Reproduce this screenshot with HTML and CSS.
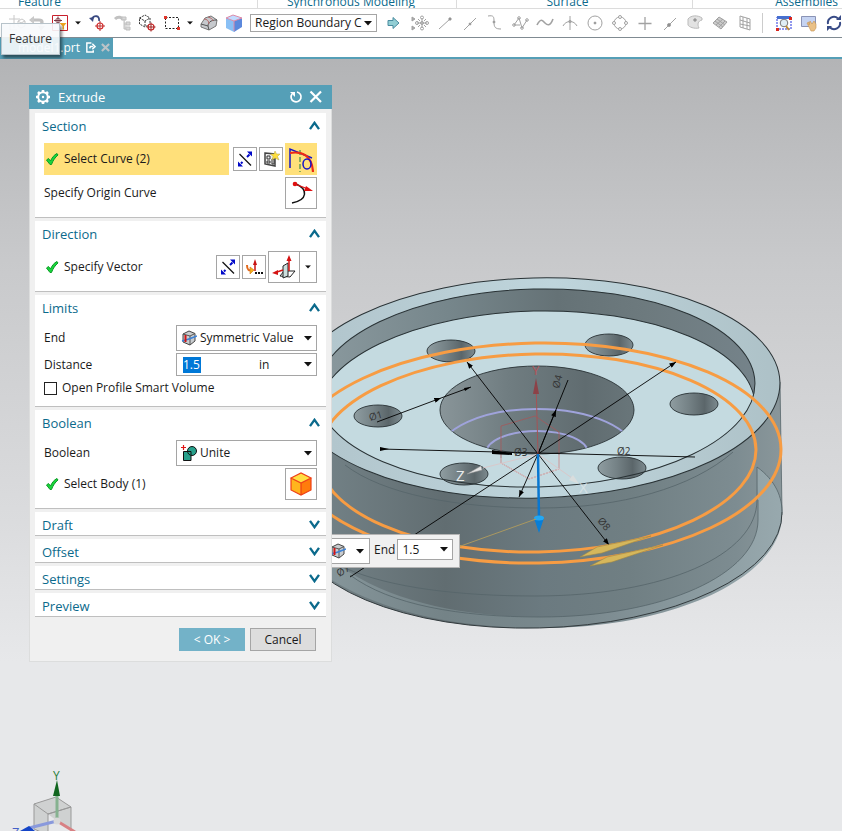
FILE: index.html
```html
<!DOCTYPE html>
<html lang="en">
<head>
<meta charset="utf-8">
<title>model1.prt - Extrude</title>
<link rel="stylesheet" href="styles.css">
</head>
<body>
<svg class="defs" aria-hidden="true">
  <symbol id="check" viewBox="0 0 14 14"><path d="M1.500 8 3.500 6.500 5.500 9 C7 5.500 9 3 12 1.500 L13 3 C10 5.500 8 8.500 6.500 12.500 L5 12.500Z" fill="#19d63c" stroke="#0c9a26" stroke-width="1"/></symbol>
  <symbol id="flip" viewBox="0 0 18 18"><path d="M3.500 4 15 15.500" stroke="#111" stroke-width="1.200"/><path d="M5 13.500 6.500 12M11 7 13.500 4.500" stroke="#0008c8" stroke-width="2"/><path d="M2 16.500V11.500L7 16.500ZM16 1.500V6.500L11 1.500Z" fill="#0008c8"/></symbol>
  <symbol id="up" viewBox="0 0 12 10"><path d="M1 9 6 2 11 9" fill="none" stroke="#0b6a8c" stroke-width="2.600"/></symbol>
  <symbol id="down" viewBox="0 0 12 10"><path d="M1 1 6 8 11 1" fill="none" stroke="#0b6a8c" stroke-width="2.600"/></symbol>
  <symbol id="caret" viewBox="0 0 8 5"><path d="M0 0H8L4 4.500Z" fill="#111"/></symbol>
  <symbol id="limit" viewBox="0 0 16 16"><path d="M2 4 8 1 14 3.500V11L9 15 2 12Z" fill="#c9cccf" stroke="#444"/><path d="M2 4 9 6 14 3.500M9 6V15" fill="none" stroke="#555"/><path d="M1 11 8 9 16 6" stroke="#3c82d8" stroke-width="1.500"/><path d="M4.500 5V12" stroke="#d31515" stroke-width="2"/></symbol>
</svg>

<header class="ribbon">
  <div class="group g-feature"><span>Feature</span></div>
  <div class="group g-sync"><span>Synchronous Modeling</span></div>
  <div class="group g-surface"><span>Surface</span></div>
  <div class="group g-asm"><span>Assemblies</span></div>
</header>

<nav class="toolbar" aria-label="Selection bar">
  <button class="tool narrow dim" aria-label="Feature"><svg viewBox="0 0 18 18"><path d="M1 5H12M6 1V14M10 7 14 5 17 7V12L13 14 10 12ZM10 7 13 9 17 7M2 10V16H9" fill="none" stroke="#888"/></svg></button>
  <button class="tool narrow dim" aria-label="Undo selection"><svg viewBox="0 0 18 18"><path d="M3 6H11C15 6 15 10 12 10" fill="none" stroke="#777" stroke-width="3"/><path d="M1 6 6 2V10ZM10 12H17L13 17Z" fill="#888"/></svg></button>
  <button class="tool" aria-label="Snap filter"><svg viewBox="0 0 18 18"><path d="M1.500 1.500H16.500V16.500H1.500Z" fill="#fff" stroke="#c8202c"/><circle cx="7" cy="6.500" r="2.300" fill="none" stroke="#94545c"/><path d="M7 2.500V10.500M3 6.500H11" stroke="#773b45"/><path d="M8.500 9H15.500L13 12V15.500H11.500V12Z" fill="#f0a51e"/></svg></button>
  <button class="tool drop" aria-label="Filter options"><svg viewBox="0 0 8 5"><use href="#caret"/></svg></button>
  <button class="tool" aria-label="Reset selection"><svg viewBox="0 0 18 18"><path d="M4 5C6 1 12 1 11 7" fill="none" stroke="#3a4a82" stroke-width="1.800"/><path d="M1 4 6 3 5 8Z" fill="#3a4a82"/><circle cx="12" cy="12" r="3" fill="none" stroke="#d52b2b" stroke-width="1.200"/><path d="M12 7V17M7 12H17" stroke="#b33"/></svg></button>
  <button class="tool dim" aria-label="Tree"><svg viewBox="0 0 18 18"><path d="M2 5C5 2 9 3 10 6" fill="none" stroke="#777" stroke-width="3"/><path d="M11 5V15H14M11 10H14M13 8H17V11H13ZM13 13H17V16H13ZM9 3H13V6H9Z" fill="#aaa" stroke="#777"/></svg></button>
  <button class="tool" aria-label="Select body"><svg viewBox="0 0 18 18"><path d="M1.500 4 7 1 12 4V10L7 13 1.500 10ZM1.500 4 7 7 12 4M7 7V13" fill="none" stroke="#333" stroke-dasharray="2 1"/><circle cx="13" cy="13" r="3" fill="#fff" stroke="#c22" stroke-width="1.200"/><path d="M13 8.500V17.500M8.500 13H17.500" stroke="#922"/></svg></button>
  <button class="tool" aria-label="Rectangle select"><svg viewBox="0 0 18 18"><path d="M2.500 3.500H15.500V14.500H2.500Z" fill="none" stroke="#222" stroke-dasharray="2 1.500"/><path d="M1 2H4V5H1ZM14 13H17V16H14Z" fill="#e0362b"/></svg></button>
  <button class="tool drop" aria-label="Select options"><svg viewBox="0 0 8 5"><use href="#caret"/></svg></button>
  <button class="tool" aria-label="Shaded part"><svg viewBox="0 0 18 18"><path d="M1 10 5 4 11 2 17 6 16 12 9 16 1 13Z" fill="#c6c9cd" stroke="#777"/><path d="M1 10 8 12 9 16M8 12C8 9 10 6 17 6" fill="none" stroke="#555"/><path d="M4 5C7 5 9 7 9 10M8 3C11 4 13 5 13 7" fill="none" stroke="#b76a6a"/></svg></button>
  <button class="tool" aria-label="Shaded cube"><svg viewBox="0 0 18 18"><path d="M1 4 8 1 17 4 9 7Z" fill="#c1dbff"/><path d="M1 4 9 7V18L1 14Z" fill="#89c0f5"/><path d="M9 7 17 4V13L9 18Z" fill="#5b88dc"/><path d="M1 4 8 1 17 4 9 7ZM9 7V17" fill="none" stroke="#dc8ba9"/></svg></button>
  <select class="region" aria-label="Region rule"><option>Region Boundary C</option></select>
  <button class="tool go" aria-label="Next"><svg viewBox="0 0 18 18"><path d="M4 6.500H9V3.500L15 9 9 14.500V11.500H4Z" fill="#92ced4" stroke="#498b9f"/></svg></button>
  <div class="snaps">
    <button class="tool" aria-label="Snap points"><svg viewBox="0 0 18 18" class="line"><path d="M1 3 4 5 1 7ZM1 12 4 14 1 16Z" fill="#aaa"/><path d="M6 9H16M11 4V14"/><circle cx="11" cy="9" r="1.500"/><circle cx="11" cy="3.500" r="1.500"/><circle cx="11" cy="14.500" r="1.500"/><circle cx="6" cy="9" r="1.500"/><circle cx="16" cy="9" r="1.500"/><path d="M7 5 9 7M15 5 13 7M7 13 9 11M15 13 13 11"/></svg></button>
    <button class="tool" aria-label="End point"><svg viewBox="0 0 18 18" class="line"><path d="M3 15 14 5"/><circle cx="14" cy="5" r="1.200" fill="#777"/></svg></button>
    <button class="tool" aria-label="Mid point"><svg viewBox="0 0 18 18" class="line"><path d="M3 16 15 4"/><circle cx="9" cy="10" r="1" fill="#777"/></svg></button>
    <button class="tool" aria-label="Control point"><svg viewBox="0 0 18 18" class="line"><path d="M2 2C8 1 8 3 8 8S9 15 15 15"/><circle cx="8" cy="8" r="1" fill="#888"/></svg></button>
    <button class="tool" aria-label="Polyline point"><svg viewBox="0 0 18 18" class="line"><path d="M3 11 8 4 11 14 16 6M3 11H9"/><circle cx="3" cy="11" r="1.300"/><circle cx="8" cy="4" r="1.300"/><circle cx="11" cy="14" r="1.300"/><circle cx="16" cy="6" r="1.300"/></svg></button>
    <button class="tool" aria-label="Spline point"><svg viewBox="0 0 18 18" class="line"><path d="M1 11C5 3 7 7 9 9S14 13 17 5" stroke-width="1.600"/></svg></button>
    <button class="tool" aria-label="Intersection point"><svg viewBox="0 0 18 18" class="line"><path d="M2 12C5 6 13 6 16 12M9 2V16"/><circle cx="9" cy="7.500" r="1.200"/></svg></button>
    <button class="tool" aria-label="Arc centre"><svg viewBox="0 0 18 18" class="line"><circle cx="9" cy="9" r="7"/><circle cx="9" cy="9" r="1" fill="#777"/></svg></button>
    <button class="tool" aria-label="Quadrant point"><svg viewBox="0 0 18 18" class="line"><circle cx="9" cy="9" r="6"/><g fill="#fff"><circle cx="9" cy="3" r="1.500"/><circle cx="9" cy="15" r="1.500"/><circle cx="3" cy="9" r="1.500"/><circle cx="15" cy="9" r="1.500"/></g></svg></button>
    <button class="tool" aria-label="Existing point"><svg viewBox="0 0 18 18" class="line"><path d="M9 3V16M2.500 9.500H15.500" stroke-width="1.300"/></svg></button>
    <button class="tool" aria-label="Point on curve"><svg viewBox="0 0 18 18" class="line"><path d="M3 16 15 4"/><circle cx="8" cy="11" r="1.500" fill="#888"/></svg></button>
    <button class="tool" aria-label="Point on face"><svg viewBox="0 0 18 18" class="line"><path d="M2 5C5 1 12 1 16 4L16 6C12 7 11 10 13 14 8 15 3 13 2 11Z" fill="#e2e2e2" stroke="#bbb"/><circle cx="9" cy="6" r="1.300" fill="#888"/></svg></button>
    <button class="tool" aria-label="Facet point"><svg viewBox="0 0 18 18" class="line"><path d="M2 9 8 3 16 8 10 15ZM4 7 12 13M6 5 14 11M5 11 12 5M8 13 14 7" fill="#ccc"/></svg></button>
    <button class="tool" aria-label="Grid point"><svg viewBox="0 0 18 18" class="line"><path d="M4 2 14 5V16L4 13ZM4 6 14 9M4 10 14 12M7 3V14M11 4V15"/></svg></button>
  </div>
  <i class="sep"></i>
  <button class="tool" aria-label="Fit view"><svg viewBox="0 0 18 18"><path d="M2 3H16V15H2Z" fill="none" stroke="#2230dd" stroke-dasharray="2 1"/><path d="M2 2H16V5H2Z" fill="#466fd0"/><circle cx="9" cy="9" r="3.800" fill="#e0eef5" stroke="#777"/><path d="M11 12 14 16" stroke="#bd8a36" stroke-width="2"/><path d="M14 3H17V6H14ZM1 14H4V17H1Z" fill="#d9271f"/></svg></button>
  <button class="tool" aria-label="Pan view"><svg viewBox="0 0 18 18"><path d="M1.500 2.500H15.500V12.500H1.500Z" fill="#c5d3f2" stroke="#8a93b5"/><path d="M7 9 9 8 9 11 10 7 12 10 14 7 16 10V14L14 17H11Z" fill="#eac187" stroke="#c49251" stroke-width=".6"/></svg></button>
  <button class="tool" aria-label="Rotate view"><svg viewBox="0 0 18 18"><path d="M3 10A6 6 0 0 1 13 4.500M15 8A6 6 0 0 1 5 13.500" fill="none" stroke="#384b86" stroke-width="2"/><path d="M11 6H16V1ZM7 12H2V17Z" fill="#384b86"/></svg></button>
</nav>

<div class="tabs">
  <a class="tab" href="#model">model1.prt
    <svg class="tabicon" viewBox="0 0 12 12"><path d="M7 1H2V11H9V9M5 7 6 5H9M8 2 11 5 8 8" fill="none" stroke="#fff" stroke-width="1.600"/></svg>
    <svg class="tabclose" viewBox="0 0 10 10"><path d="M1 1 9 9M9 1 1 9" stroke="#bcc3c7" stroke-width="2.400"/></svg>
  </a>
  <div class="tip" role="tooltip">Feature</div>
</div>

<main class="viewport" id="model">
  <svg class="scene" viewBox="0 59 842 772" preserveAspectRatio="xMinYMin slice" role="img" aria-label="Wheel hub model">
    <defs>
      <linearGradient id="side" gradientUnits="userSpaceOnUse" x1="300" y1="0" x2="784" y2="0"><stop offset="0" stop-color="#76858a"/><stop offset=".3" stop-color="#616d71"/><stop offset=".5" stop-color="#6b7a80"/><stop offset=".68" stop-color="#707f83"/><stop offset=".9" stop-color="#7d8c91"/><stop offset="1" stop-color="#8a979b"/></linearGradient>
      <linearGradient id="flange" gradientUnits="userSpaceOnUse" x1="300" y1="0" x2="784" y2="0"><stop offset="0" stop-color="#8a9a9f"/><stop offset=".3" stop-color="#748387"/><stop offset=".6" stop-color="#7b8a8f"/><stop offset="1" stop-color="#98a9ae"/></linearGradient>
      <linearGradient id="wall" gradientUnits="userSpaceOnUse" x1="320" y1="0" x2="756" y2="0"><stop offset="0" stop-color="#8a999e"/><stop offset=".3" stop-color="#76868b"/><stop offset=".55" stop-color="#657276"/><stop offset=".75" stop-color="#6d7a7e"/><stop offset="1" stop-color="#75838a"/></linearGradient>
      <linearGradient id="rim" gradientUnits="userSpaceOnUse" x1="332" y1="0" x2="780" y2="0"><stop offset="0" stop-color="#b2c6cd"/><stop offset=".5" stop-color="#bfd5dc"/><stop offset="1" stop-color="#adc1c7"/></linearGradient>
      <linearGradient id="hole"><stop offset="0" stop-color="#8f9da1"/><stop offset=".4" stop-color="#748185"/><stop offset=".72" stop-color="#5b666a"/><stop offset="1" stop-color="#7d8b90"/></linearGradient>
      <linearGradient id="bore"><stop offset="0" stop-color="#899599"/><stop offset=".35" stop-color="#707d81"/><stop offset=".75" stop-color="#606c70"/><stop offset="1" stop-color="#69767a"/></linearGradient>
      <clipPath id="pocket"><ellipse cx="536" cy="388" rx="219" ry="99" transform="rotate(-1.400 536 388)"/></clipPath>
      <clipPath id="boreclip"><ellipse cx="537" cy="410" rx="97" ry="44"/></clipPath>
      <marker id="dim" viewBox="0 0 8 6" refX="8" refY="3" markerWidth="7" markerHeight="5" markerUnits="userSpaceOnUse" orient="auto"><path d="M0 0 8 3 0 6Z" fill="#000"/></marker>
    </defs>
    <path d="M292 394V524A245 110 -1.400 0 0 782 512L780 382Z" fill="url(#side)"/>
    <path d="M757 467C775 480 783 497 782 515 783 574 680 628 540 628 445 628 375 607 332 580V560C382 600 460 617 540 617 664 617 758 574 758 520Z" fill="url(#flange)"/>
    <path d="M292 524A245 110 -1.400 0 0 782 512" fill="none" stroke="#333b3e"/>
    <path d="M345 465C383 494 455 508 540 508 620 508 692 488 733 452M345 568C390 588 460 596 535 596 665 596 757 555 757 500V467M350 575C390 605 460 617 540 617 664 617 758 574 758 520V500M757 467C775 480 783 497 782 515M780 382 782 512" fill="none" stroke="#566569" stroke-width=".8"/>
    <g transform="rotate(-1.400 536 388)"><ellipse cx="536" cy="388" rx="244" ry="110" fill="url(#rim)" stroke="#293235"/><ellipse cx="536" cy="388" rx="219" ry="99" fill="url(#wall)"/></g>
    <g clip-path="url(#pocket)"><ellipse cx="536" cy="410" rx="219" ry="99" fill="#c4dae0" stroke="#293235" transform="rotate(-1.400 536 410)"/></g>
    <g stroke="#293235" stroke-width=".9" fill="url(#hole)">
      <ellipse cx="451" cy="351" rx="24" ry="11"/><ellipse cx="378" cy="416" rx="24" ry="11"/><ellipse cx="609" cy="345" rx="24" ry="11"/><ellipse cx="694" cy="404" rx="24" ry="11"/><ellipse cx="622" cy="468" rx="24" ry="11"/><ellipse cx="464" cy="474" rx="24" ry="11"/>
      <ellipse cx="537" cy="410" rx="97" ry="44" fill="url(#bore)"/>
    </g>
    <ellipse cx="536" cy="388" rx="219" ry="99" fill="none" stroke="#293235" transform="rotate(-1.400 536 388)"/>
    <g clip-path="url(#boreclip)" fill="none" stroke="#9fa3db" stroke-width="2"><ellipse cx="537" cy="453" rx="98" ry="44"/><ellipse cx="537" cy="453" rx="51" ry="22"/></g>
    <path d="M501 463V426L535 416 559 432V469L529 479Z" fill="none" stroke="#a4585a" stroke-width=".8"/>
    <path d="M501 458V463L529 479 559 469V455M538 454 483 468M538 454 572 478" fill="none" stroke="#d9c8ca" stroke-width="1"/>
    <g fill="none" stroke="#f79c43" stroke-width="3"><ellipse cx="537" cy="453" rx="244" ry="110" transform="rotate(-1 537 453)"/><ellipse cx="537" cy="453" rx="219" ry="99" transform="rotate(-1 537 453)"/></g>
    <g fill="none" stroke="#000" stroke-width=".9" marker-end="url(#dim)"><path d="M538 454 467 362" marker-end="url(#dim)"/><path d="M538 454 676 362" marker-end="url(#dim)"/><path d="M538 454 519 497" marker-end="url(#dim)"/><path d="M538 454 609 545" marker-end="url(#dim)"/><path d="M377 422 441 398" marker-end="url(#dim)"/><path d="M538 454 556 410" marker-end="url(#dim)"/></g>
    <path d="M568 380 538 454 350 577M380 449 695 457M441 398 471 387" fill="none" stroke="#000" stroke-width=".9"/>
    <path d="M380 447 389 449 380 451ZM492 450 512 453 512 455 492 454ZM464 388 471 387 465 391Z" fill="#000"/>
    <g class="dims"><text x="370" y="421" transform="rotate(-15 370 421)">Ø1</text><text x="559" y="389" transform="rotate(-75 559 389)">Ø4</text><text x="617" y="455">Ø2</text><text x="514" y="456">Ø3</text><text x="597" y="521" transform="rotate(50 597 521)">Ø8</text><text x="339" y="577" transform="rotate(-30 339 577)">Ø7</text></g>
    <path d="M538 454 536 382" stroke="#a55356"/><path d="M536 378 533 394H539Z" fill="#8c4248"/><text class="axis red" x="532" y="375">Y</text>
    <text class="axis white" x="456" y="481">Z</text><text class="axis white faint" x="579" y="493">X</text>
    <path d="M467 474 481 466 482 470Z" fill="#e4e4e4" stroke="#999" stroke-width=".5"/><path d="M579 484 569 480 573 475Z" fill="#d9dddd"/>
    <path d="M538 454 539 520" stroke="#0877d1" stroke-width="2.500"/><path d="M534 518 539 533 544 518Z" fill="#087ed7"/><ellipse cx="539" cy="518" rx="5" ry="2.500" fill="#23a8f4"/>
    <path d="M458 547 536 519" stroke="#aa9860"/>
    <path d="M580 557 597 547 651 536 602 553ZM590 566 607 557 663 545 612 562Z" fill="#d6b75b" stroke="#a08844" stroke-width=".6"/>
    <g class="triad"><path d="M34 804 56 797 71 807 48 814ZM34 804V829L48 835V814L71 807V831" fill="#c9cacb" fill-opacity=".8" stroke="#999"/><path d="M57 821V796" stroke="#86b290" stroke-width="3"/><path d="M57 821 29 828" stroke="#8999dc" stroke-width="3"/><path d="M57 821 75 832" stroke="#d88083" stroke-width="3"/><circle cx="57" cy="821" r="3.500" fill="#d9d9d9"/><path d="M57 780 53 796H60Z" fill="#11651f"/><path d="M20 831 29 826 35 831Z" fill="#1545c7"/><text class="axis green" x="53" y="780">Y</text><text class="axis blue" x="12" y="837">Z</text></g>
  </svg>

  <div class="floatbar">
    <button class="mini" aria-label="Limit type"><svg class="i16" viewBox="0 0 16 16"><use href="#limit"/></svg><svg class="caret" viewBox="0 0 8 5"><use href="#caret"/></svg></button>
    <label for="fend">End</label>
    <select id="fend"><option>1.5</option></select>
  </div>

  <form class="dialog">
    <div class="title">
      <svg class="i16" viewBox="0 0 16 16"><circle cx="8" cy="8" r="4.800" fill="none" stroke="#fff" stroke-width="2"/><path d="M8 1V3M8 13V15M1 8H3M13 8H15M3 3 4.500 4.500M11.500 11.500 13 13M3 13 4.500 11.500M11.500 4.500 13 3" stroke="#fff" stroke-width="2.600"/><circle cx="8" cy="8" r="1.200" fill="#fff"/></svg>
      <h1>Extrude</h1>
      <button type="button" class="bare" aria-label="Reset"><svg viewBox="0 0 14 14"><path d="M3 4A5 5 0 1 0 8 2" fill="none" stroke="#fff" stroke-width="1.700"/><path d="M1 2H6V7Z" fill="#fff"/></svg></button>
      <button type="button" class="bare" aria-label="Close"><svg viewBox="0 0 14 14"><path d="M1.500 1.500 12 12M12 1.500 1.500 12" stroke="#fff" stroke-width="2.200"/></svg></button>
    </div>
    <div class="content">
      <section>
        <h2>Section <svg class="chev" viewBox="0 0 12 10"><use href="#up"/></svg></h2>
        <div class="body">
          <div class="row tall">
            <span class="pick active"><svg class="tick" viewBox="0 0 14 14"><use href="#check"/></svg>Select Curve (2)</span>
            <button type="button" class="sq" aria-label="Reverse direction"><svg viewBox="0 0 18 18"><use href="#flip"/></svg></button>
            <button type="button" class="sq" aria-label="Sketch section"><svg viewBox="0 0 18 18"><path d="M3 3 13 4V16L3 14Z" fill="#eee" stroke="#444" stroke-width="1.500"/><path d="M5 6H8V9H5ZM5 11H8V13H5ZM10 9H12V14H10Z" fill="none" stroke="#333"/><path d="M13 1 14.500 4 18 4 15.500 6.500 17 10 13 8 10 10 11 6.500 8.500 4 12 4Z" fill="#ffdf3c" stroke="#b5a548" stroke-width=".5"/></svg></button>
            <button type="button" class="big active" aria-label="Curve"><svg viewBox="0 0 26 26"><path d="M2 22V3L24 12" fill="none" stroke="#1414c8" stroke-width="1.500"/><path d="M12 4V26" stroke="#17783b" stroke-dasharray="5 2"/><path d="M2 7C14 5 24 9 25 26" fill="none" stroke="#ee2a16" stroke-width="2.200"/><ellipse cx="19" cy="18" rx="4" ry="5" fill="none" stroke="#1414c8" stroke-width="1.500"/></svg></button>
          </div>
          <div class="row tall"><span class="lead">Specify Origin Curve</span><button type="button" class="big" aria-label="Origin curve"><svg viewBox="0 0 26 26"><path d="M8 4C20 9 20 20 4 23" fill="none" stroke="#111" stroke-width="1.500"/><path d="M7 4 20 9" stroke="#df1010" stroke-width="1.300"/><circle cx="7" cy="4" r="2.300" fill="#df1010"/><path d="M18 6 25 11 16 11Z" fill="#df1010"/></svg></button></div>
        </div>
      </section>
      <section>
        <h2>Direction <svg class="chev" viewBox="0 0 12 10"><use href="#up"/></svg></h2>
        <div class="body">
          <div class="row tall">
            <span class="pick"><svg class="tick" viewBox="0 0 14 14"><use href="#check"/></svg>Specify Vector</span>
            <button type="button" class="sq" aria-label="Reverse direction"><svg viewBox="0 0 18 18"><use href="#flip"/></svg></button>
            <button type="button" class="sq" aria-label="Vector dialog"><svg viewBox="0 0 18 18"><path d="M10 13V5" stroke="#c91212" stroke-width="1.500"/><path d="M10 1 8 7H12Z" fill="#c91212"/><path d="M2 7C2 12 4 13 7 12" fill="none" stroke="#e26a1e" stroke-width="2"/><path d="M5 9 9 12 5 16Z" fill="#f2b21c" stroke="#d57412" stroke-width=".6"/><path d="M10 14H12V16H10ZM13 14H15V16H13ZM16 14H18V16H16Z" fill="#111"/></svg></button>
            <button type="button" class="big" aria-label="Face normal"><svg viewBox="0 0 26 26"><path d="M9 22 13 17 24 17 19 23Z" fill="#fff" stroke="#222"/><path d="M12 12 17 9V22L12 24Z" fill="#cbdedd" stroke="#222"/><path d="M18 17V5M12 16 6 18" stroke="#d41313" stroke-width="1.500"/><path d="M18 1 15.500 7H20.500ZM1 19 7 16V21Z" fill="#d41313"/></svg></button>
            <button type="button" class="bigdrop" aria-label="Vector options"><svg viewBox="0 0 8 5"><use href="#caret"/></svg></button>
          </div>
        </div>
      </section>
      <section>
        <h2>Limits <svg class="chev" viewBox="0 0 12 10"><use href="#up"/></svg></h2>
        <div class="body">
          <div class="row"><label class="lead" for="end">End</label><span class="combo"><svg class="i16 glyph" viewBox="0 0 16 16"><use href="#limit"/></svg><select id="end"><option>Symmetric Value</option></select></span></div>
          <div class="row short"><label class="lead" for="dist">Distance</label><span class="combo"><input id="dist" type="text" value="1.5"><select class="unit" aria-label="Unit"><option>in</option></select></span></div>
          <div class="row check"><input id="open" type="checkbox"><label for="open">Open Profile Smart Volume</label></div>
        </div>
      </section>
      <section>
        <h2>Boolean <svg class="chev" viewBox="0 0 12 10"><use href="#up"/></svg></h2>
        <div class="body">
          <div class="row"><label class="lead" for="bool">Boolean</label><span class="combo"><svg class="i16 glyph" viewBox="0 0 16 16"><path d="M2.500 6.500H10V15.500H2.500Z" fill="#27a18c" stroke="#111"/><circle cx="11" cy="6" r="4.500" fill="#27a18c" stroke="#111"/><path d="M6.500 6.500H10V10" fill="none" stroke="#111"/><path d="M2.500 0V5M0 2.500H5" stroke="#e01515" stroke-width="1.200"/></svg><select id="bool"><option>Unite</option></select></span></div>
          <div class="row tall"><span class="pick"><svg class="tick" viewBox="0 0 14 14"><use href="#check"/></svg>Select Body (1)</span><button type="button" class="big" aria-label="Body"><svg viewBox="0 0 26 26"><path d="M3 7 13 2 23 7 13 12Z" fill="#ffdf42"/><path d="M3 7 13 12V24L3 19Z" fill="#ffb51d"/><path d="M13 12 23 7V19L13 24Z" fill="#ff7c0c"/><path d="M3 7 13 2 23 7 13 12ZM3 7V19L13 24 23 19V7M13 12V24" fill="none" stroke="#ee4018" stroke-width="1.200"/></svg></button></div>
        </div>
      </section>
      <section><h2>Draft <svg class="chev" viewBox="0 0 12 10"><use href="#down"/></svg></h2></section>
      <section><h2>Offset <svg class="chev" viewBox="0 0 12 10"><use href="#down"/></svg></h2></section>
      <section><h2>Settings <svg class="chev" viewBox="0 0 12 10"><use href="#down"/></svg></h2></section>
      <section><h2>Preview <svg class="chev" viewBox="0 0 12 10"><use href="#down"/></svg></h2></section>
    </div>
    <div class="actions"><button type="button" class="ok">&lt; OK &gt;</button><button type="button" class="cancel">Cancel</button></div>
  </form>
</main>
</body>
</html>
```
FILE: styles.css
```css
* { box-sizing: border-box; }
body { margin: 0; min-height: 100vh; display: flex; flex-direction: column; overflow: hidden; background: #fff; color: #1a1a1a; font: 12px/16px "Open Sans", "Noto Sans", sans-serif; }
button, select, input { font: inherit; color: inherit; margin: 0; padding: 0; border-radius: 0; }
button { display: flex; align-items: center; justify-content: center; border: 0; background: none; }
svg { display: block; flex: none; }
.defs { position: absolute; width: 0; height: 0; }
.i16 { width: 16px; height: 16px; }

.ribbon { display: flex; height: 9px; border-bottom: 1px solid #dcdcdc; overflow: hidden; color: #0b6a8c; }
.group { display: flex; align-items: flex-end; justify-content: center; white-space: nowrap; border-right: 1px solid #dcdcdc; }
.group span { line-height: 12px; }
.g-feature { width: 258px; justify-content: flex-start; padding-left: 18px; }
.g-sync { width: 199px; padding-right: 12px; }
.g-surface { width: 236px; padding-right: 14px; }
.g-asm { flex: 1; justify-content: flex-end; padding-right: 4px; border: 0; }

.toolbar { display: flex; align-items: center; height: 29px; padding-left: 7px; border-bottom: 1px solid #808b92; overflow: hidden; }
.tool { flex: none; width: 25px; height: 24px; }
.tool svg { width: 18px; height: 18px; }
.narrow { width: 20px; }
.tool.drop { width: 12px; }
.drop svg { width: 6px; height: 4px; }
.dim { opacity: .45; }
.snaps { display: flex; margin-left: 2px; }
.line { fill: none; stroke: #a2a2a2; }
.sep { flex: none; width: 1px; height: 20px; margin: 0 8px 0 5px; background: #ccc; }
.go { margin-left: 3px; }

select { appearance: none; border: 1px solid #a5a5a5; background: #fff url("data:image/svg+xml,%3Csvg xmlns='http://www.w3.org/2000/svg' width='8' height='5'%3E%3Cpath d='M0 0H8L4 4.500Z' fill='%23111'/%3E%3C/svg%3E") no-repeat right 4px center; }
.region { flex: none; width: 127px; height: 18px; margin-left: 4px; padding-left: 4px; line-height: 14px; }

.tabs { position: relative; display: flex; height: 21px; border-bottom: 2px solid #559fb7; }
.tab { display: flex; align-items: center; width: 113px; padding-left: 18px; background: #559fb7; color: #fff; text-decoration: none; white-space: nowrap; }
.tabicon { width: 11px; height: 11px; margin-left: 5px; }
.tabclose { width: 9px; height: 9px; margin-left: 5px; }
.tip { position: absolute; left: 1px; top: -15px; padding: 7px; border: 1px solid #b7c3ca; background: rgba(247, 250, 252, .9); box-shadow: 2px 3px 3px rgba(0, 0, 0, .5); color: #333; }

.viewport { position: relative; flex: 1; background: linear-gradient(#b3b4b6, #c8c9cb 26%, #dbdcde 60%, #e7e8ea 78%); }
.scene { position: absolute; inset: 0; width: 100%; height: 100%; }
.dims { font-size: 10px; fill: #333; }
.axis { font-size: 13px; }
.red { fill: #b25459; }
.white { fill: #e8eced; font-size: 15px; }
.faint { opacity: .6; }
.green { fill: #27803a; font-size: 12px; }
.blue { fill: #4560c8; }

.floatbar { position: absolute; left: 320px; top: 475px; display: flex; align-items: flex-start; gap: 3px; padding: 3px 6px 3px 0; border: 1px solid #b4b4b4; background: #f0f0f0; }
.floatbar label { line-height: 24px; padding-left: 1px; }
.mini { width: 49px; height: 26px; gap: 10px; padding-left: 2px; border: 1px solid #a5a5a5; background: #fff; }
.mini .caret { width: 8px; height: 5px; }
#fend { width: 56px; height: 21px; margin-top: 1px; margin-left: -1px; padding-left: 4px; }

.dialog { position: absolute; left: 29px; top: 26px; width: 303px; border: 1px solid #dcdddd; border-top: 0; background: #f0f0f0; }
.title { display: flex; align-items: center; height: 24px; margin: 0 -1px; padding: 0 9px 0 6px; background: #559fb7; color: #fff; }
.title h1 { flex: 1; margin: 0 0 0 7px; font-size: 13px; line-height: 24px; font-weight: 400; }
.bare { width: 14px; height: 14px; margin-left: 6px; }
.bare svg { width: 14px; height: 14px; }
.content { display: flex; flex-direction: column; gap: 3px; padding: 4px 5px 0; }
section { background: #fff; border-bottom: 1px solid #bfbfbf; }
h2 { display: flex; align-items: center; justify-content: space-between; margin: 0; padding: 2px 6px 0 7px; height: 23px; color: #0b6a8c; font-size: 13px; line-height: 20px; font-weight: 400; }
.chev { width: 11px; height: 9px; }
.body { display: flex; flex-direction: column; gap: 2px; padding: 7px 9px 8px; }
.row { display: flex; align-items: center; height: 26px; }
.tall { height: 32px; gap: 2px; }
.short { height: 23px; }
.lead { flex: 1; }
.check { height: 20px; gap: 5px; }
.check input { appearance: none; width: 13px; height: 13px; border: 1px solid #222; background: #fff; }
.pick { display: flex; align-items: center; gap: 5px; flex: 1; height: 32px; padding-left: 1px; }
.tick { width: 14px; height: 14px; }
.active { background: #ffe07a; }
.pick.active { margin-right: 2px; }
.sq { width: 24px; height: 24px; border: 1px solid #a5a5a5; background: #fff; }
.sq svg { width: 18px; height: 18px; }
.big { width: 32px; height: 32px; border: 1px solid #a5a5a5; }
.big.active { border-color: #ffe07a; }
.big svg { width: 26px; height: 26px; }
.bigdrop { width: 18px; height: 32px; margin-left: -3px; border: 1px solid #a5a5a5; }
.bigdrop svg { width: 6px; height: 4px; }
.combo { position: relative; display: flex; align-items: center; width: 141px; height: 100%; border: 1px solid #a5a5a5; }
.combo select { flex: 1; height: 100%; padding-left: 23px; border: 0; }
.glyph { position: absolute; left: 4px; top: 4px; }
#dist { width: 18px; height: 16px; margin-left: 6px; border: 0; background: #0078d7; color: #fff; }
.combo .unit { margin-left: 56px; padding-left: 2px; }
.actions { display: flex; justify-content: flex-end; gap: 5px; padding: 11px 15px 10px; }
.actions button { width: 66px; height: 23px; }
.ok { background: #73b2c8; color: #fff; }
.actions .cancel { border: 1px solid #a5a5a5; background: #ddd; }
```
